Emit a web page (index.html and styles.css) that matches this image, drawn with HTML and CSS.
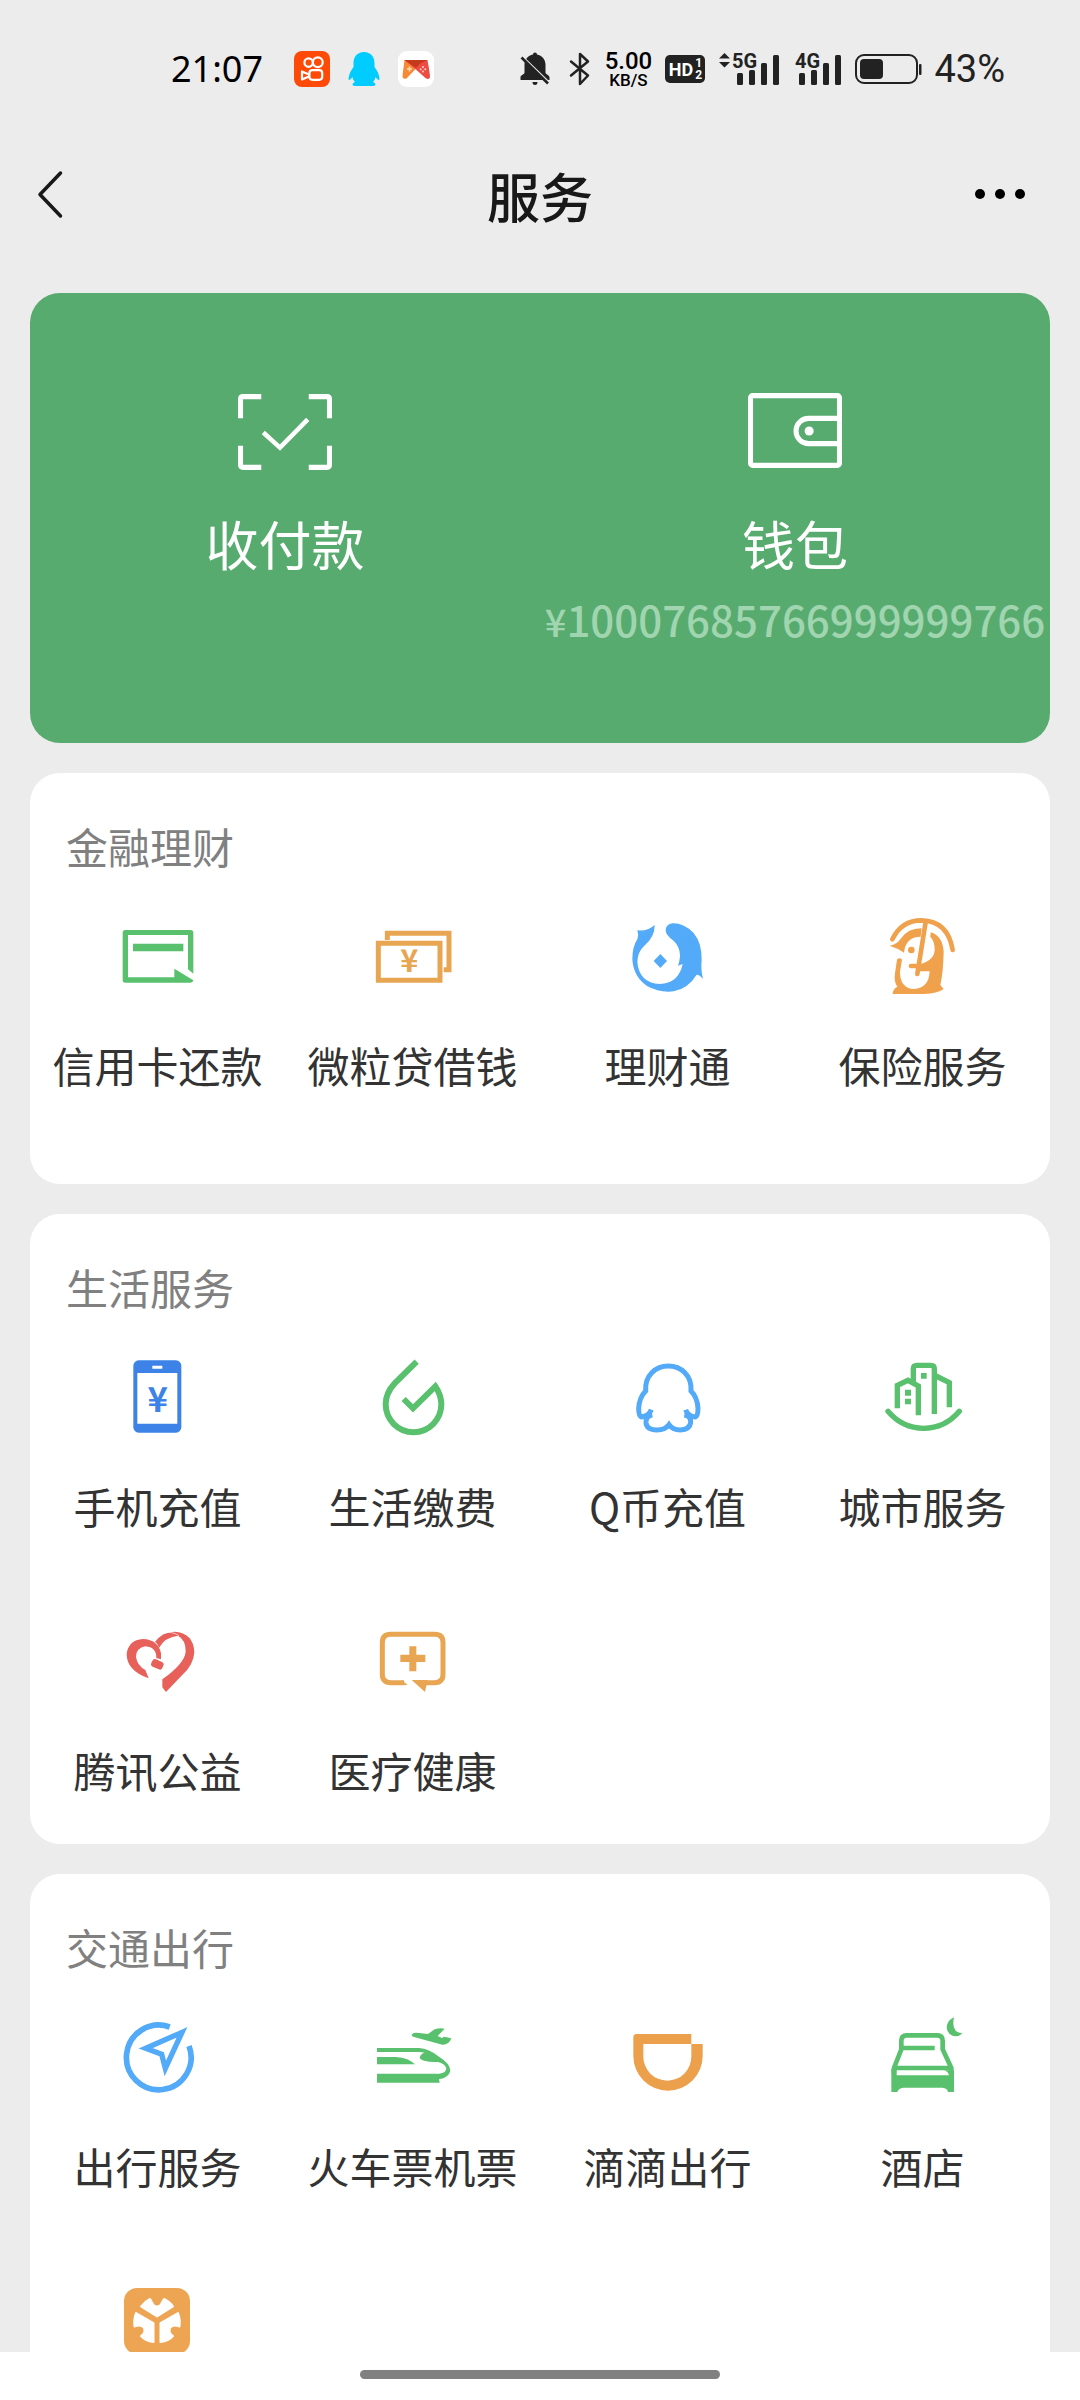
FILE: index.html
```html
<!DOCTYPE html>
<html lang="zh-CN">
<head>
<meta charset="utf-8">
<meta name="viewport" content="width=device-width, initial-scale=1">
<title>服务</title>
<link rel="stylesheet" href="styles.css">
</head>
<body>
<div class="app">
  <div class="status">
    <div class="status-left">
      <span class="clock">21:07</span>
      <svg width="36" height="36" viewBox="0 0 36 36"><rect width="36" height="36" rx="8" fill="#ff4906"/><g fill="none" stroke="#fff" stroke-width="2.2" stroke-linejoin="round"><circle cx="14.6" cy="11.6" r="4.2"/><circle cx="23.8" cy="11.2" r="4.9"/><rect x="15.4" y="19.2" width="12.8" height="9.6" rx="3"/><path d="M8 20.5v8l7-3v-2z"/></g></svg>
      <svg width="32" height="36" viewBox="0 0 32 36"><path d="M16 1C9 1 5.500 6 5.500 12v4C2.500 20 .5 24 .5 28.500c.5 1 2 0 4-2.500.3 2 1 3.500 2.500 5-3 1-3.500 4 0 4h18c3.500 0 3-3 0-4 1.500-1.500 2.200-3 2.500-5 2 2.500 3.500 3.500 4 2.500 0-4.500-2-8.500-5-12.500v-4C26.500 6 23 1 16 1z" fill="#0cf"/></svg>
      <svg width="36" height="36" viewBox="0 0 36 36"><rect width="36" height="36" rx="9" fill="#fff"/><path d="M6.500 9h22l-11 9-9 9.500q-4 1-4-3z" fill="#f98a35"/><path d="M6.500 9h23q1.500 8 2.500 16 0 4-4 2.500l-9.500-8.500z" fill="#ee4b45"/><path d="M6.500 9h23L22 12.500l-4 4.500z" fill="#c63a1c"/><path d="M11.500 15.500v5M9 18h5" stroke="#ffe0b5" stroke-width="1.500"/><g fill="#ffd0c8"><circle cx="25" cy="16" r="1"/><circle cx="25" cy="20.500" r="1"/><circle cx="22.700" cy="18.200" r="1"/><circle cx="27.300" cy="18.200" r="1"/></g></svg>
    </div>
    <div class="status-right">
      <svg width="37" height="36" viewBox="0 0 37 36"><path d="M15 1.500q2 0 2 2c5 1 8.500 5 8.500 10v8c0 2 4 2.500 4 5v2.500H.500V26c0-2 4-2.500 4-4.500v-8c0-5 3.500-9 8.500-10q0-2 2-2z" fill="#222"/><path d="M12.500 31h5q0 3-2.500 3t-2.500-3z" fill="#222"/><path d="M-1 3l30 29" stroke="#ececec" stroke-width="3"/><path d="M1.500 6.500l26.500 26" stroke="#222" stroke-width="2.600"/></svg>
      <svg width="22" height="36" viewBox="0 0 22 36"><path d="M2 10.500l17 14-8 8.500V3l8 7.500-17 14" fill="none" stroke="#222" stroke-width="2.500" stroke-linejoin="round" stroke-linecap="round"/></svg>
      <div class="speed"><span class="speed-value">5.00</span><span class="speed-unit">KB/S</span></div>
      <div class="hd"><span>HD</span><span class="hd-sim"><span>1</span><span>2</span></span></div>
      <svg width="62" height="36" viewBox="0 0 62 36" fill="#222"><path d="M0 7.500L5.500 2l5.500 5.500zM0 11h11l-5.500 5.500z"/><text x="13" y="17" class="net">5G</text><rect x="18" y="22" width="6" height="12" rx="1.500"/><rect x="30" y="19" width="6" height="15" rx="1.500"/><rect x="42" y="12" width="6" height="22" rx="1.500"/><rect x="54" y="4" width="6" height="30" rx="1.500"/></svg>
      <svg width="50" height="36" viewBox="0 0 50 36" fill="#222"><text x="2" y="17" class="net">4G</text><rect x="6" y="22" width="6" height="12" rx="1.500"/><rect x="18" y="19" width="6" height="15" rx="1.500"/><rect x="30" y="12" width="6" height="22" rx="1.500"/><rect x="42" y="4" width="6" height="30" rx="1.500"/></svg>
      <svg width="67" height="36" viewBox="0 0 67 36"><rect x="1" y="4" width="61" height="28" rx="8" fill="none" stroke="#222" stroke-width="2"/><rect x="5" y="8" width="23" height="20" rx="4" fill="#222"/><rect x="64" y="13" width="2.500" height="11" rx="1" fill="#222"/></svg>
      <span class="battery">43%</span>
    </div>
  </div>

  <header class="header">
    <button class="icon-button" type="button" aria-label="返回"><svg width="28" height="50" viewBox="0 0 28 50"><path d="M24.500 3L4 24.500l20.500 21.500" fill="none" stroke="#181818" stroke-width="3.500" stroke-linecap="round" stroke-linejoin="round"/></svg></button>
    <h1 class="title">服务</h1>
    <button class="icon-button" type="button" aria-label="更多"><svg width="50" height="50" viewBox="0 0 50 50" fill="#000"><circle cx="5" cy="24" r="5"/><circle cx="25" cy="24" r="5"/><circle cx="45" cy="24" r="5"/></svg></button>
  </header>

  <main class="content">
    <section class="pay">
      <a class="pay-item" href="#">
        <svg width="94" height="76" viewBox="0 0 93 75" fill="none" stroke="#fff" stroke-width="5"><path d="M2.500 24V5q0-2.500 2.500-2.500h18M70 2.500h18q2.500 0 2.500 2.500v19M2.500 51v19q0 2.500 2.500 2.500h18M70 72.500h18q2.500 0 2.500-2.500V51"/><path d="M25 38l16.500 15L69 25" stroke-width="4.500"/></svg>
        <span class="pay-label">收付款</span>
      </a>
      <a class="pay-item" href="#">
        <svg width="94" height="76" viewBox="0 0 93 75" fill="none" stroke="#fff" stroke-width="5"><rect x="2.500" y="1.500" width="88" height="69" rx="2"/><path d="M90 24H60a12.500 12.500 0 0 0 0 25h30"/><circle cx="60.500" cy="36.500" r="4.500" fill="#fff" stroke="none"/></svg>
        <span class="pay-label">钱包</span>
        <span class="pay-amount"><span class="yen">¥</span>10007685766999999766</span>
      </a>
    </section>

    <section class="card card-roomy">
      <h2 class="card-title">金融理财</h2>
      <div class="grid">
        <a class="item" href="#"><svg class="icon" viewBox="248 426 270 270" fill="#59c16d"><path d="M285 480H481q8 0 8 8V611l-16-13V495H293V622H432V596l57 35q-1 7-9 7H285q-8 0-8-8V488q0-8 8-8z"/><path d="M308 521h151v23H308z"/></svg><span class="label">信用卡还款</span></a>
        <a class="item" href="#"><svg class="icon" viewBox="1012 426 270 270"><g fill="none" stroke="#e8a552" stroke-width="15"><path d="M1070 510V490h185v109h-16M1043 520h185v111h-185z"/></g><text class="yen-note" x="1136" y="605">¥</text></svg><span class="label">微粒贷借钱</span></a>
        <a class="item" href="#"><svg class="icon" viewBox="248 426 270 270" fill="#52aaf8"><path d="M343 464Q325 484 291 481Q296 495 291 508Q276 530 276 568Q279 620 320 648Q358 669 400 664Q444 655 469 614Q478 614 488 627Q481 600 484 570Q485 520 460 489Q430 459 397 460Q376 463 376 482Q377 495 398 511Q430 540 413 587L427 582Q415 640 358 642Q296 638 291 575Q292 545 312 527Q344 500 343 464z"/><path d="M360 552l20 21-20 21-20-21z"/></svg><span class="label">理财通</span></a>
        <a class="item" href="#"><svg class="icon" viewBox="1012 426 270 270" fill="#f0a14c"><g fill="none" stroke="#f0a14c" stroke-width="14" stroke-linecap="round"><path d="M1055 508Q1082 451 1143 451Q1222 453 1236 540"/><path d="M1155 456L1130 612M1111 588h22"/></g><path d="M1047 527Q1070 523 1080 506Q1103 474 1143 475L1140 500Q1095 500 1090 548Q1070 534 1047 527z"/><circle cx="1112" cy="540" r="10"/><path d="M1170 487Q1206 498 1209 545Q1208 605 1199 645L1209 657Q1190 671 1150 672H1056Q1057 656 1070 650Q1059 635 1063 610L1069 569Q1076 561 1084 569L1078 605Q1078 655 1120 657Q1165 654 1167 604H1133L1139 582Q1181 570 1182 540Q1182 512 1169 501z"/></svg><span class="label">保险服务</span></a>
      </div>
    </section>

    <section class="card">
      <h2 class="card-title">生活服务</h2>
      <div class="grid">
        <a class="item" href="#"><svg class="icon" viewBox="248 309 270 270"><rect x="309" y="331" width="144" height="217" rx="16" fill="#3d82e6"/><path d="M321 369h120v152H321zM366 347h30v9h-30z" fill="#fff"/><text class="yen-phone" x="382" y="486">¥</text></svg><span class="label">手机充值</span></a>
        <a class="item" href="#"><svg class="icon" viewBox="1012 309 270 270"><path d="M1158 335L1092 400Q1065 429 1065 463A83 83 0 0 0 1232 463Q1232 436 1214 409L1147 475L1119 447" fill="none" stroke="#59c16d" stroke-width="18"/></svg><span class="label">生活缴费</span></a>
        <a class="item" href="#"><svg class="icon" viewBox="248 99 270 270" fill="none" stroke="#52aaf8" stroke-width="15"><path d="M333 269Q326 288 303 291Q295 288 295 265Q297 232 316 213C313 165 347 138 384 138S455 165 452 213Q471 232 473 265Q473 288 465 291Q442 288 436 269"/><path d="M336 285Q316 288 317 308Q319 329 350 330Q375 330 386 314Q397 330 420 330Q448 329 451 308Q453 288 432 285"/></svg><span class="label">Q币充值</span></a>
        <a class="item" href="#"><svg class="icon" viewBox="1012 99 270 270" fill="#59c16d"><g fill="none" stroke="#59c16d" stroke-width="16"><path d="M1070 265V196L1102 181L1133 198V286M1118 188V146Q1118 136 1128 136H1171Q1181 136 1181 146V282M1186 168L1226 188V262"/><path d="M1042 274Q1085 325 1149 325T1256 274" stroke-linecap="round"/></g><path d="M1093 209h18v18h-18zM1093 236h18v17h-18zM1141 159h17v17h-17z"/></svg><span class="label">城市服务</span></a>
        <a class="item" href="#"><svg class="icon" viewBox="248 81 270 270" fill="#e8605a"><path d="M355 265Q289 242 289 192Q294 150 338 147Q384 149 392 190V208L378 204Q379 172 345 169Q318 174 317 200Q320 226 345 240z"/><path d="M374 156Q396 125 432 125Q490 129 492 187Q490 225 455 256L407 306L396 292V268Q463 220 466 185Q467 150 443 137Q402 142 386 174Q382 160 374 156z"/><path d="M398 130Q425 122 446 137" fill="none" stroke="#fff" stroke-width="2"/><rect x="363" y="211" width="36" height="24" rx="8" transform="rotate(24 381 223)"/></svg><span class="label">腾讯公益</span></a>
        <a class="item" href="#"><svg class="icon" viewBox="1012 81 270 270" fill="#e8a552"><path d="M1120 278H1080Q1055 278 1055 253V158Q1055 133 1080 133H1212Q1237 133 1237 158V253Q1237 278 1212 278H1175" fill="none" stroke="#e8a552" stroke-width="15"/><path d="M1113 270l18 15h-18zM1143 270h48l-4 18-4 18zM1136 169h21v25h27v22h-27v28h-21v-28h-27v-22h27z"/></svg><span class="label">医疗健康</span></a>
      </div>
    </section>

    <section class="card">
      <h2 class="card-title">交通出行</h2>
      <div class="grid">
        <a class="item" href="#"><svg class="icon" viewBox="248 339 270 270" fill="none" stroke="#52aaf8" stroke-width="17"><path d="M418 381A97 97 0 1 0 476 438"/><path d="M455 397L346 445L394 463L405 505z" stroke-width="16"/></svg><span class="label">出行服务</span></a>
        <a class="item" href="#"><svg class="icon" viewBox="1012 339 270 270" fill="#59c16d"><path d="M1143 404Q1147 396 1165 399L1192 402L1212 388Q1228 382 1242 386L1221 408L1234 414L1240 410L1262 415Q1255 435 1235 434L1150 411Q1142 409 1143 404z"/><path d="M1039 444H1165Q1195 446 1225 470Q1258 490 1259 512Q1255 532 1225 538L1227 548H1039V521H1226Q1247 519 1247 505Q1242 490 1222 486Q1180 488 1167 475Q1168 462 1182 458Q1170 455 1160 456H1039z"/><path d="M1039 471H1095Q1135 474 1153 493H1039z"/></svg><span class="label">火车票机票</span></a>
        <a class="item" href="#"><svg class="icon" viewBox="248 69 270 270"><path fill="#eca04c" fill-rule="evenodd" d="M279 142Q279 132 289 132H453V162H487V198A104 104 0 0 1 279 198zM309 162V200A72 72 0 0 0 453 200V162z"/></svg><span class="label">滴滴出行</span></a>
        <a class="item" href="#"><svg class="icon" viewBox="1012 69 270 270" fill="#59c16d"><path d="M1060 250V234L1082 178V152Q1082 136 1098 136H1190Q1206 136 1206 152V178L1232 234V250M1082 174H1182M1060 234H1232" fill="none" stroke="#59c16d" stroke-width="14"/><path d="M1052 236H1068V256H1225Q1222 244 1210 241H1240V306H1222Q1220 294 1205 293H1088Q1074 294 1070 306H1052zM1240 82Q1230 128 1266 130Q1255 140 1243 139Q1219 134 1218 112Q1220 90 1240 82z"/></svg><span class="label">酒店</span></a>
        <a class="item" href="#" aria-label="出行"><svg class="icon" viewBox="0 0 90 90"><rect x="11" y="11" width="66" height="66" rx="13" fill="#eea553"/><g fill="#fff" stroke="#fff" stroke-width="2" stroke-linejoin="round"><path d="M37 22l3.500 6q3.500 3 7 0l3.500-6q6 3 9 7.500L44 39.500 28 29.500q4-5 9-7.500z"/><path d="M23 36l17.500 10v19q-8-1-12.500-6 5-3 3-8-3-4-9.500-1.500-1-7 1.500-13.500z"/><path d="M65 36L47.500 46v19q8-1 12.500-6-5-3-3-8 3-4 9.500-1.500 1-7-1.500-13.500z"/></g></svg></a>
      </div>
    </section>
  </main>

  <div class="home"><span class="home-pill"></span></div>
</div>
</body>
</html>
```
FILE: styles.css
```css
* { box-sizing: border-box; }

body {
  margin: 0;
  background: #ececec;
  color: #333;
  font-family: "Noto Sans CJK SC", "Noto Sans", sans-serif;
}

a { color: inherit; text-decoration: none; }
svg { display: block; flex: none; overflow: visible; }

.app {
  display: flex;
  flex-direction: column;
  height: 100vh;
}

/* Status bar */
.status {
  display: flex;
  flex: none;
  align-items: center;
  justify-content: space-between;
  height: 138px;
  padding: 0 75px 0 171px;
  color: #222;
  font-family: Roboto, sans-serif;
}

.status-left { display: flex; align-items: center; gap: 18px; }
.status-right { display: flex; align-items: center; gap: 12px; }

.clock {
  margin-right: 13px;
  color: #000;
  font-family: "Noto Sans", sans-serif;
  font-size: 36px;
  line-height: 36px;
}

.speed {
  display: flex;
  flex-direction: column;
  align-items: center;
  width: 50px;
  color: #000;
  font-weight: 500;
}
.speed-value { font-size: 24px; line-height: 22px; }
.speed-unit { font-size: 17px; line-height: 16px; }

.hd {
  display: flex;
  align-items: center;
  justify-content: center;
  gap: 2px;
  width: 40px;
  height: 28px;
  margin-right: 2px;
  border-radius: 5px;
  background: #222;
  color: #fff;
  font-size: 18px;
  font-weight: 700;
}
.hd-sim { display: flex; flex-direction: column; font-size: 12px; line-height: 12px; }

.net { font-size: 20px; font-weight: 700; }

.battery { font-size: 38px; line-height: 38px; }

/* Title bar */
.header {
  display: flex;
  flex: none;
  align-items: center;
  justify-content: space-between;
  height: 114px;
  padding: 0 55px 0 36px;
}

.icon-button {
  display: flex;
  flex: 1;
  margin: 0;
  padding: 0;
  border: 0;
  background: none;
}
.icon-button:last-child { justify-content: flex-end; }

.title {
  margin: 0;
  padding-left: 19px;
  color: #181818;
  font-size: 53px;
  font-weight: 500;
  line-height: 72px;
}

/* Scrolling content */
.content {
  display: flex;
  flex: 1;
  flex-direction: column;
  gap: 30px;
  min-height: 0;
  padding: 41px 30px 0;
  overflow: hidden;
}

.pay {
  display: grid;
  flex: none;
  grid-template-columns: repeat(2, minmax(0, 1fr));
  min-height: 450px;
  padding-top: 101px;
  border-radius: 30px;
  background: #58ab6f;
  color: #fff;
}

.pay-item { display: flex; flex-direction: column; align-items: center; }
.pay-label { margin-top: 37px; font-size: 53px; line-height: 72px; }

.pay-amount {
  margin-top: 10px;
  color: #a0d5b0;
  font-size: 42px;
  font-weight: 500;
  line-height: 60px;
}
.yen { font-size: 38px; }

.card {
  flex: none;
  padding: 43px 0 44px;
  border-radius: 30px;
  background: #fff;
}
.card-roomy { padding-bottom: 89px; }

.card-title {
  margin: 0;
  padding: 0 36px;
  color: #808080;
  font-size: 42px;
  font-weight: 400;
  line-height: 60px;
}

.grid {
  display: grid;
  grid-template-columns: repeat(4, 1fr);
  row-gap: 45px;
}

.item {
  display: flex;
  flex-direction: column;
  align-items: center;
  padding-top: 36px;
}

.icon { width: 90px; height: 90px; }
.label { margin-top: 33px; font-size: 42px; line-height: 60px; white-space: nowrap; }

.yen-note,
.yen-phone { font-weight: 700; text-anchor: middle; }
.yen-note { fill: #e8a552; font-size: 92px; }
.yen-phone { fill: #3d82e6; font-size: 104px; }

/* Gesture area */
.home {
  display: flex;
  flex: none;
  justify-content: center;
  height: 48px;
  padding-top: 18px;
  background: #fff;
}
.home-pill { width: 33.3333%; height: 9px; border-radius: 5px; background: #808080; }
```
